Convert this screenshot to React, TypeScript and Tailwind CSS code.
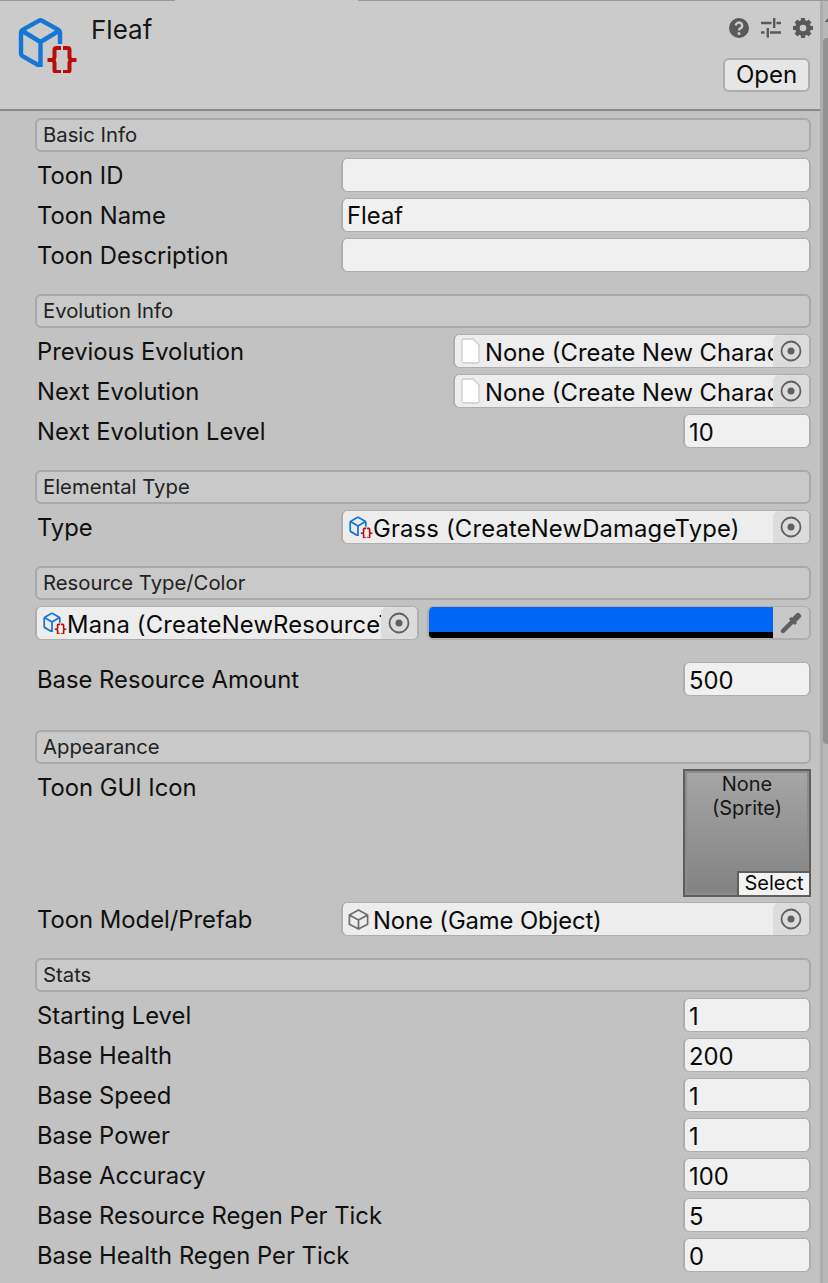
import type { ReactNode } from "react";

function ScriptIcon({ small = false }: { small?: boolean }) {
  return (
    <svg viewBox="0 0 60 56" className={small ? "h-[22.400px] w-[24px] shrink-0" : "h-[56px] w-[60px] shrink-0"}>
      <path
        d="M42 27V15.500a3 3 0 0 0-1.500-2.600L24 3.800a3.500 3.500 0 0 0-3.400 0L4.500 12.900A3 3 0 0 0 3 15.500v21a3 3 0 0 0 1.500 2.600L21 48.500M3.600 13.500 22.500 25 41.400 13.500M22.500 25v25"
        fill="none"
        stroke="#1577d4"
        strokeWidth="4.400"
        strokeLinejoin="round"
      />
      <path
        d="M43 31h-4.500a2 2 0 0 0-2 2v7a3 3 0 0 1-3 3H29.500h4a3 3 0 0 1 3 3v7a2 2 0 0 0 2 2H43M45 31h4.500a2 2 0 0 1 2 2v7a3 3 0 0 0 3 3H58.500h-4a3 3 0 0 0-3 3v7a2 2 0 0 1-2 2H45"
        fill="none"
        stroke="#bb0a0a"
        strokeWidth="4"
      />
    </svg>
  );
}

function GameObjectIcon() {
  return (
    <svg viewBox="0 0 24 24" className="ml-[-2px] mr-[3px] h-[23px] w-[23px] shrink-0">
      <path
        d="M12 2 21.500 7.300v9.700L12 22l-9.500-5V7.300zM2.500 7.300 12 12.500l9.500-5.200M12 12.500V22"
        fill="none"
        stroke="#6e6e6e"
        strokeWidth="1.800"
        strokeLinejoin="round"
      />
    </svg>
  );
}

function DocIcon() {
  return (
    <svg viewBox="0 0 19 26" className="mr-[5px] h-[26px] w-[19px] shrink-0">
      <path d="M1 3a2 2 0 0 1 2-2h9l6 6v16a2 2 0 0 1-2 2H3a2 2 0 0 1-2-2z" fill="#fff" stroke="#cdcdcd" strokeWidth="1.300" />
    </svg>
  );
}

function TargetDot() {
  return (
    <svg viewBox="0 0 22 22" className="h-[22px] w-[22px]">
      <circle cx="11" cy="11" r="9.500" fill="none" stroke="#5f5f5f" strokeWidth="1.800" />
      <circle cx="11" cy="11" r="3.500" fill="#5f5f5f" />
    </svg>
  );
}

function SectionHeader({ title }: { title: string }) {
  return (
    <div className="flex h-[34px] items-center rounded-[6px] border-2 border-[#a9a9a9] bg-[#c9c9c9] px-[6px] text-[20.300px] text-[#222]">
      {title}
    </div>
  );
}

function Label({ children }: { children: ReactNode }) {
  return <div className="h-[34px] flex-1 truncate pl-[2px] text-[23.800px] leading-[36px] text-[#101010]">{children}</div>;
}

function TextRow({ label, value = "" }: { label: string; value?: string }) {
  return (
    <div className="flex h-[34px] items-center">
      <Label>{label}</Label>
      <div className="flex h-[34px] w-[470px] items-center rounded-[6px] border-x-2 border-y border-[#aeaeae] bg-[#f0f0f0] px-[4px] pt-[2px] text-[23.800px] text-[#0a0a0a]">
        {value}
      </div>
    </div>
  );
}

function NumberRow({ label, value }: { label: string; value: string }) {
  return (
    <div className="flex h-[34px] items-center">
      <Label>{label}</Label>
      <div className="flex h-[34px] w-[128px] items-center rounded-[6px] border-x-2 border-y border-[#aeaeae] bg-[#f0f0f0] px-[4px] pt-[4px] text-[23.800px] text-[#0a0a0a]">
        {value}
      </div>
    </div>
  );
}

function ObjectField({ icon, text, className, textClass = "" }: { icon: ReactNode; text: string; className: string; textClass?: string }) {
  return (
    <div className={`flex h-[34px] items-center overflow-hidden rounded-[6px] border-x-2 border-y border-[#aeaeae] bg-[#ededed] text-[23.800px] text-[#0a0a0a] ${className}`}>
      <div className="flex min-w-0 flex-1 items-center overflow-hidden whitespace-nowrap pl-[6px]">
        {icon}
        <span className={`pt-[4px] ${textClass}`}>{text}</span>
      </div>
      <div className="flex h-full w-[36px] shrink-0 items-center justify-center rounded-tl-[6px] bg-[#dcdcdc]">
        <TargetDot />
      </div>
    </div>
  );
}

function ObjectRow({ label, icon, text, width, textClass }: { label: string; icon: ReactNode; text: string; width: "wide" | "mid"; textClass?: string }) {
  return (
    <div className="flex h-[34px] items-center">
      <Label>{label}</Label>
      <ObjectField icon={icon} text={text} textClass={textClass} className={width === "wide" ? "w-[470px]" : "w-[358px]"} />
    </div>
  );
}

export default function App() {
  return (
    <div className="h-[1283px] w-[828px] overflow-hidden bg-[#c2c2c2] font-['Inter',sans-serif]">
      {/* tab strip edge */}
      <div className="flex h-[1px]">
        <div className="w-[175px] bg-[#9a9a9a]" />
        <div className="w-[183px] bg-[#cbcbcb]" />
        <div className="flex-1 bg-[#9a9a9a]" />
      </div>
      <div className="flex h-[1282px]">
        <div className="flex min-w-0 flex-1 flex-col">
          {/* inspector title bar */}
          <div className="flex h-[110px] shrink-0 justify-between border-b-2 border-[#8a8a8a] bg-[#cbcbcb] pr-[10px]">
            <div className="flex pl-[18px] pt-[16px]">
              <ScriptIcon />
              <div className="pl-[13px] text-[26px] leading-[26px] text-[#161616]">Fleaf</div>
            </div>
            <div className="flex flex-col items-end">
              <div className="mr-[-3px] flex items-center gap-[12px] pt-[17px]">
                <svg viewBox="0 0 20 20" className="h-[20px] w-[20px]">
                  <circle cx="10" cy="10" r="10" fill="#595959" />
                  <path d="M6.800 7.600a3.200 3 0 1 1 4.900 2.500c-1 .7-1.700 1.200-1.700 2.300" fill="none" stroke="#cbcbcb" strokeWidth="2.400" />
                  <circle cx="10" cy="15.500" r="1.500" fill="#cbcbcb" />
                </svg>
                <svg viewBox="0 0 20 20" className="h-[20px] w-[20px]">
                  <path d="M0 5h10.500M15.500 5H20M13.200 0v10M0 14.500h3.500M9 14.500h11M6.800 10v9.500" fill="none" stroke="#595959" strokeWidth="2.400" />
                </svg>
                <svg viewBox="0 0 20 20" className="h-[20px] w-[20px]">
                  <circle cx="10" cy="10" r="5.600" fill="none" stroke="#595959" strokeWidth="4.600" />
                  <path d="M10 0v4M10 16v4M0 10h4M16 10h4M3 3l3 3M14 14l3 3M17 3l-3 3M6 14l-3 3" stroke="#595959" strokeWidth="4.200" />
                </svg>
              </div>
              <div className="mt-[20px] flex h-[34px] w-[87px] items-center justify-center rounded-[6px] border-2 border-[#adadad] bg-[#e6e6e6] text-[24px] text-[#0a0a0a]">
                Open
              </div>
            </div>
          </div>

          {/* fields */}
          <div className="flex flex-col pl-[35px] pr-[9px] pt-[7px]">
            <SectionHeader title="Basic Info" />
            <div className="mt-[6px] flex flex-col gap-[6px]">
              <TextRow label="Toon ID" />
              <TextRow label="Toon Name" value="Fleaf" />
              <TextRow label="Toon Description" />
            </div>

            <div className="mt-[22px]">
              <SectionHeader title="Evolution Info" />
            </div>
            <div className="mt-[6px] flex flex-col gap-[6px]">
              <ObjectRow label="Previous Evolution" icon={<DocIcon />} text="None (Create New Character)" width="mid" />
              <ObjectRow label="Next Evolution" icon={<DocIcon />} text="None (Create New Character)" width="mid" />
              <NumberRow label="Next Evolution Level" value="10" />
            </div>

            <div className="mt-[22px]">
              <SectionHeader title="Elemental Type" />
            </div>
            <div className="mt-[6px]">
              <ObjectRow label="Type" icon={<ScriptIcon small />} text="Grass (CreateNewDamageType)" width="wide" textClass="tracking-[0.18px]" />
            </div>

            <div className="mt-[22px]">
              <SectionHeader title="Resource Type/Color" />
            </div>
            <div className="mt-[6px] flex h-[34px] items-center gap-[8px]">
              <ObjectField icon={<ScriptIcon small />} text="Mana (CreateNewResourceType)" className="w-[384px]" textClass="tracking-[0.18px]" />
              <div className="flex h-[34px] flex-1 overflow-hidden rounded-[6px] border-x-2 border-b-2 border-t border-[#aeaeae] bg-[#c8c8c8]">
                <div className="flex flex-1 flex-col">
                  <div className="flex-1 bg-[#0066f5]" />
                  <div className="h-[6px] bg-black" />
                </div>
                <div className="flex w-[36px] items-center justify-center">
                  <svg viewBox="0 0 22 22" className="h-[22px] w-[22px]">
                    <path d="M3 19 12 10" fill="none" stroke="#5f5f5f" strokeWidth="4.500" strokeLinecap="round" />
                    <path d="M10 6l6 6" fill="none" stroke="#5f5f5f" strokeWidth="3" />
                    <path d="M14 8l4-4" fill="none" stroke="#5f5f5f" strokeWidth="6" strokeLinecap="round" />
                  </svg>
                </div>
              </div>
            </div>

            <div className="mt-[22px]">
              <NumberRow label="Base Resource Amount" value="500" />
            </div>

            <div className="mt-[34px]">
              <SectionHeader title="Appearance" />
            </div>
            <div className="mt-[6px] flex h-[126px] items-start">
              <Label>Toon GUI Icon</Label>
              <div className="relative mt-[-1px] h-[128px] w-[128px] border-2 border-[#5e5e5e] bg-gradient-to-b from-[#a6a6a6] to-[#828282] pt-[1px] text-center text-[20px] leading-[24px] text-[#161616] shadow-[inset_0_0_0_2px_#8c8c8c]">
                <div>None</div>
                <div>(Sprite)</div>
                <div className="absolute bottom-0 right-0 flex h-[24px] w-[72px] items-center justify-center border-l-2 border-t-2 border-[#5e5e5e] bg-[#f2f2f2] pb-[3px] text-[20px] leading-none text-[#0a0a0a]">
                  Select
                </div>
              </div>
            </div>
            <div className="mt-[6px]">
              <ObjectRow label="Toon Model/Prefab" icon={<GameObjectIcon />} text="None (Game Object)" width="wide" textClass="tracking-[-0.1px]" />
            </div>

            <div className="mt-[22px]">
              <SectionHeader title="Stats" />
            </div>
            <div className="mt-[6px] flex flex-col gap-[6px]">
              <NumberRow label="Starting Level" value="1" />
              <NumberRow label="Base Health" value="200" />
              <NumberRow label="Base Speed" value="1" />
              <NumberRow label="Base Power" value="1" />
              <NumberRow label="Base Accuracy" value="100" />
              <NumberRow label="Base Resource Regen Per Tick" value="5" />
              <NumberRow label="Base Health Regen Per Tick" value="0" />
            </div>
          </div>
        </div>

        {/* scrollbar */}
        <div className="flex h-full w-[8px] shrink-0 bg-[#b8b8b8]">
          <div className="w-[3px] bg-[#adadad]" />
          <div className="flex w-[5px] flex-col items-end pt-[17px]">
            <svg viewBox="0 0 3 4" className="h-[4px] w-[3px]">
              <path d="M3 0v4H0z" fill="#555" />
            </svg>
            <div className="mt-[16px] h-[706px] w-[5px] rounded-l-[4px] bg-[#929292]" />
          </div>
        </div>
      </div>
    </div>
  );
}
